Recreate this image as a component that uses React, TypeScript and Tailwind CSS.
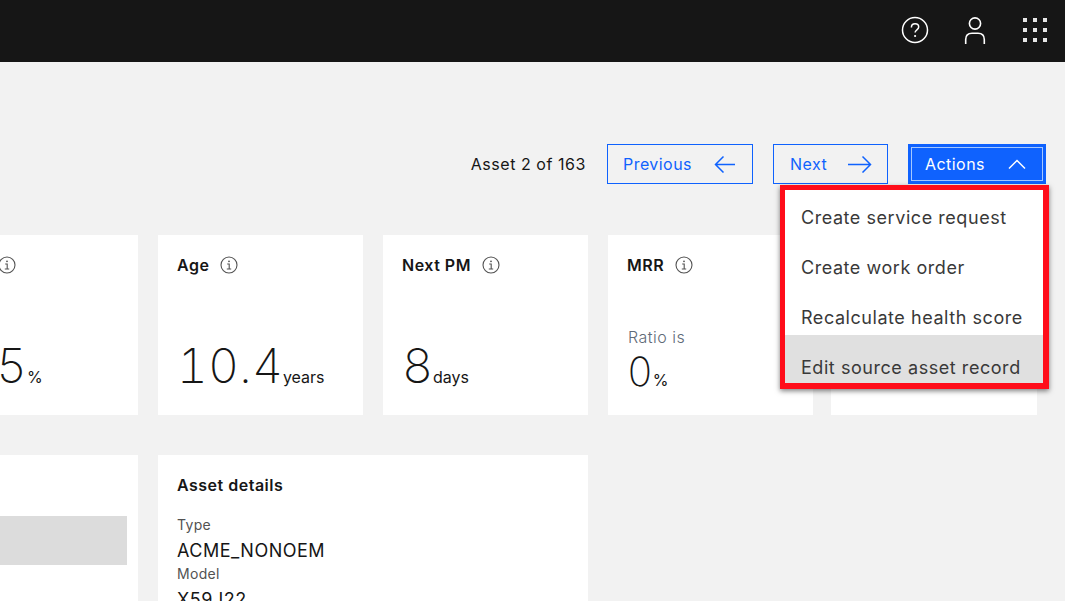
import type { ReactNode } from 'react';

const font = { fontFamily: 'Inter, "Noto Sans", sans-serif' };

function InfoIcon() {
  return (
    <svg width="18" height="18" viewBox="0 0 18 18" fill="none" stroke="#525252" aria-hidden className="shrink-0">
      <circle cx="9" cy="9" r="8" strokeWidth="1.1" />
      <path d="M7.200 8h2v5M6.800 13h4.400" strokeWidth="1.1" />
      <circle cx="9" cy="5.300" r="0.9" fill="#525252" stroke="none" />
    </svg>
  );
}

function ArrowLeft() {
  return (
    <svg width="22" height="18" viewBox="0 0 22 18" fill="none" stroke="#0f62fe" strokeWidth="1.5" aria-hidden>
      <path d="M21 9.500H1.500M9.500 1.500l-8 8 8 8" />
    </svg>
  );
}

function ArrowRight() {
  return (
    <svg width="24" height="18" viewBox="0 0 24 18" fill="none" stroke="#0f62fe" strokeWidth="1.5" aria-hidden>
      <path d="M0 9.500h22.500M14.500 1.500l8 8-8 8" />
    </svg>
  );
}

function TopBar() {
  return (
    <header className="flex h-[62px] items-center justify-end bg-[#161616] pr-[18px] pb-[2px]">
      <svg width="28" height="28" viewBox="0 0 28 28" fill="none" stroke="#fff" strokeWidth="1.5" aria-hidden>
        <circle cx="14" cy="14" r="12.500" />
        <path d="M10.400 11.400c0-2.200 1.600-3.600 3.700-3.600s3.600 1.300 3.600 3.200c0 2.900-3.600 2.800-3.600 5.600" />
        <circle cx="14.100" cy="20" r="1.100" fill="#fff" stroke="none" />
      </svg>
      <svg width="22" height="28" viewBox="0 0 22 28" fill="none" stroke="#fff" strokeWidth="1.6" aria-hidden className="ml-[35px]">
        <circle cx="11" cy="7.500" r="5.600" />
        <path d="M1.700 28v-4.500c0-4 2.600-6.300 6.300-6.300h6c3.700 0 6.300 2.300 6.300 6.300V28" />
      </svg>
      <div className="ml-[37px] grid grid-cols-3 gap-[6px]">
        {Array.from({ length: 9 }, (_, i) => (
          <span key={i} className="h-[4px] w-[4px] bg-[#e6e6e6]" />
        ))}
      </div>
    </header>
  );
}

function OutlineButton({ label, icon, className }: { label: string; icon: ReactNode; className: string }) {
  return (
    <button className={`flex h-10 items-center justify-between border border-[#0f62fe] text-base tracking-[0.45px] text-[#0f62fe] ${className}`}>
      {label}
      {icon}
    </button>
  );
}

function Toolbar() {
  return (
    <div className="flex h-10 items-center justify-end pr-[19px]">
      <span className="mr-[21px] text-base tracking-[0.55px] text-[#161616]">Asset 2 of 163</span>
      <OutlineButton label="Previous" icon={<ArrowLeft />} className="w-[146px] pr-4 pl-[15px]" />
      <OutlineButton label="Next" icon={<ArrowRight />} className="ml-5 w-[115px] pr-[15px] pl-4" />
      <button className="ml-5 flex h-10 w-[138px] items-center justify-between border-[3px] border-[#0f62fe] bg-[#0f62fe] pr-[17px] pl-[14px] text-base tracking-[0.45px] text-white outline outline-1 -outline-offset-[4px] outline-[#a6c8ff]">
        Actions
        <svg width="18" height="12" viewBox="0 0 18 12" fill="none" stroke="#fff" strokeWidth="1.5" aria-hidden>
          <path d="M1 10.500l8-8 8 8" />
        </svg>
      </button>
    </div>
  );
}

function KpiCard({ title, value, unit, note }: { title: string; value: string; unit: string; note?: string }) {
  return (
    <section className="relative h-[180px] w-[205px] shrink-0 bg-white pt-[19px] pl-[19px]">
      <h3 className="flex items-center gap-[11px] text-base leading-[22px] font-semibold tracking-[0.5px] text-[#161616]">
        {title}
        <InfoIcon />
      </h3>
      {note && <p className="absolute top-[92px] left-5 text-base leading-5 font-light tracking-[0.5px] text-[#5f6b78]">{note}</p>}
      <p className="absolute bottom-[19px] left-[19px] flex items-baseline whitespace-nowrap text-[#161616]">
        <span className={note ? 'text-[40px] leading-[48px] font-extralight tabular-nums' : 'text-[48px] leading-[60px] font-extralight tabular-nums'}>{value}</span>
        <span className="text-base leading-5">{unit}</span>
      </p>
    </section>
  );
}

function ActionsMenu() {
  const items = ['Create service request', 'Create work order', 'Recalculate health score', 'Edit source asset record'];
  return (
    <div className="absolute top-[123px] left-[780px] h-[204px] w-[269px] overflow-hidden border-[5px] border-r-[6px] border-b-[6px] border-[#ff0d1a] bg-white shadow-[0_2px_5px_rgba(0,0,0,0.5)]">
      <div className="-mt-[5px]">
        {items.map((item, i) => (
          <div
            key={item}
            className={`flex h-[50px] items-center pt-4 pl-4 text-lg tracking-[0.55px] text-[#393939] ${i === 3 ? 'bg-[#e0e0e0]' : ''}`}
          >
            {item}
          </div>
        ))}
      </div>
    </div>
  );
}

export default function App() {
  return (
    <div className="h-[601px] w-full overflow-hidden bg-[#f2f2f2]" style={font}>
      <TopBar />
      <main className="relative">
        <div className="pt-[82px]">
          <Toolbar />
        </div>
        <div className="mt-[51px] -ml-[67px] flex gap-5">
          <KpiCard title="Risk" value="7.5" unit="%" />
          <KpiCard title="Age" value="10.4" unit="years" />
          <KpiCard title="Next PM" value="8" unit="days" />
          <KpiCard title="MRR" value="0" unit="%" note="Ratio is" />
          <section className="-ml-[2px] h-[180px] w-[206px] shrink-0 bg-white" />
        </div>
        <div className="mt-10 -ml-[67px] flex gap-5">
          <section className="h-[200px] w-[205px] shrink-0 bg-white pt-[61px]">
            <div className="h-[49px] w-[194px] bg-[#dcdcdc]" />
          </section>
          <section className="h-[200px] w-[430px] shrink-0 bg-white pt-[19px] pl-[19px]">
            <h3 className="text-base leading-[22px] font-semibold tracking-[0.5px] text-[#161616]">Asset details</h3>
            <p className="mt-[20px] text-sm leading-[18px] tracking-[0.3px] text-[#525252]">Type</p>
            <p className="mt-[5px] text-lg leading-6 tracking-[0.5px] text-[#161616]">ACME_NONOEM</p>
            <p className="mt-[2px] text-sm leading-[18px] tracking-[0.3px] text-[#525252]">Model</p>
            <p className="mt-[5px] text-lg leading-6 tracking-[0.5px] text-[#161616]">X59J22</p>
          </section>
        </div>
        <ActionsMenu />
      </main>
    </div>
  );
}
